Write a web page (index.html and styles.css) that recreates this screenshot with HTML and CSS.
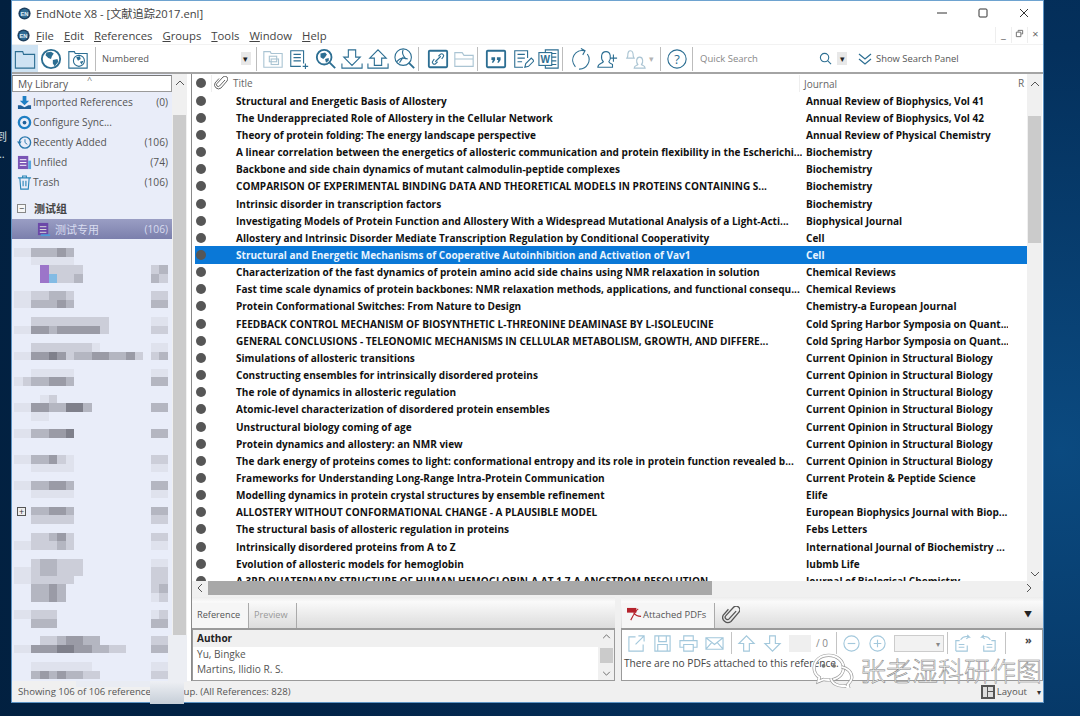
FILE: index.html
```html
<!DOCTYPE html>
<html lang="en">
<head>
    <meta charset="UTF-8">
    <title>EndNote X8</title>
    <link rel="stylesheet" href="styles.css">
</head>
<body>
    <div class="desk-label">到<br>...</div>
    <div class="window">
        <div class="titlebar">
            <svg class="app-icon" viewBox="0 0 16 16"><circle cx="8" cy="8" r="7.500" fill="#1d3f5e"/><circle cx="8" cy="8" r="5.500" fill="#2f6b94"/><text x="8" y="10.500" class="app-en">EN</text></svg>
            <span class="title-text">EndNote X8 - [文献追踪2017.enl]</span>
            <div class="win-controls">
                <svg viewBox="0 0 12 12"><path d="M1 6h10" stroke="#333" fill="none"/></svg>
                <svg viewBox="0 0 12 12"><rect x="2" y="2" width="8" height="8" rx="1" stroke="#333" fill="none"/></svg>
                <svg viewBox="0 0 12 12"><path d="M2 2l8 8M10 2l-8 8" stroke="#333" fill="none"/></svg>
            </div>
        </div>

        <div class="menubar">
            <svg class="app-icon small" viewBox="0 0 16 16"><circle cx="8" cy="8" r="7.500" fill="#1d3f5e"/><circle cx="8" cy="8" r="5.500" fill="#2f6b94"/><text x="8" y="10.500" class="app-en">EN</text></svg>
            <span class="menu-item"><u>F</u>ile</span>
            <span class="menu-item"><u>E</u>dit</span>
            <span class="menu-item"><u>R</u>eferences</span>
            <span class="menu-item"><u>G</u>roups</span>
            <span class="menu-item"><u>T</u>ools</span>
            <span class="menu-item"><u>W</u>indow</span>
            <span class="menu-item"><u>H</u>elp</span>
            <div class="mdi-buttons">
                <span class="mdi-btn">_</span>
                <span class="mdi-btn">
                    <svg viewBox="0 0 10 10"><path d="M3.500 3V1.500h5v4H7M1.500 3.500h5v5h-5z" stroke="#666" fill="none"/></svg>
                </span>
                <span class="mdi-btn">×</span>
            </div>
        </div>

        <div class="toolbar">
            <div class="tool active">
                <svg viewBox="0 0 24 24"><path d="M1.500 7V4h8l1 3h12v15h-21z" class="ln"/></svg>
            </div>
            <div class="tool">
                <svg viewBox="0 0 24 24"><circle cx="12" cy="12" r="10" class="ln thick"/><path d="M7 5l5-1 3 2-2 3-1 3-3-1-3-3zM14 13l5-1 1 3-4 5-2-3z" class="fl"/></svg>
            </div>
            <div class="tool">
                <svg viewBox="0 0 24 24"><path d="M2 7V4h6l1 2h13v16H2z" class="ln"/><circle cx="13" cy="14" r="6" class="ln"/><path d="M10 10l4-1 1 3-3 2zM14 15l4-1-2 4z" class="fl"/></svg>
            </div>
            <span class="sep sep-first"></span>
            <div class="style-select">
                <span>Numbered</span>
                <span class="drop-btn">▾</span>
            </div>
            <span class="sep"></span>
            <div class="tool dim gap-left">
                <svg viewBox="0 0 24 24"><path d="M2 6V4h7l1 2h12v15H2z" class="ln"/><rect x="8" y="9" width="8" height="6" class="ln"/><rect x="10" y="12" width="8" height="6" class="ln"/></svg>
            </div>
            <div class="tool">
                <svg viewBox="0 0 24 24"><path d="M17 17V3H3v17h11M6 7h8M6 10.500h8M6 14h8M19 17v6M16 20h6" class="ln"/></svg>
            </div>
            <div class="tool">
                <svg viewBox="0 0 24 24"><circle cx="10" cy="10" r="8" class="ln thick"/><path d="M6 6l5-1 2 2-2 3-2 2-3-2zM11 12l4-1 0 3-3 2z" class="fl"/><path d="M16 16l6 6" class="ln thick"/></svg>
            </div>
            <div class="tool">
                <svg viewBox="0 0 24 24"><path d="M8 2h8v8h5l-9 9-9-9h5zM1 17v5h22v-5" class="ln"/></svg>
            </div>
            <div class="tool">
                <svg viewBox="0 0 24 24"><path d="M8 19v-8H3l9-9 9 9h-5v8zM1 17v5h22v-5" class="ln"/></svg>
            </div>
            <div class="tool">
                <svg viewBox="0 0 24 24"><circle cx="10" cy="10" r="9" class="ln"/><path d="M10 2c-2 4 1 8 3 10M3 15c3-4 7-5 12-3M10 10l-4 6" class="ln"/><path d="M16 16l6 6" class="ln thick"/></svg>
            </div>
            <span class="sep"></span>
            <div class="tool gap-link">
                <svg viewBox="0 0 24 24"><rect x="2" y="3" width="20" height="18" rx="1" class="ln thick"/><path d="M9 15l6-6M8 12l-1.500 2a2 2 0 0 0 3 3l2-2M16 12l1.500-2a2 2 0 0 0-3-3l-2 2" class="ln"/></svg>
            </div>
            <div class="tool dim">
                <svg viewBox="0 0 24 24"><path d="M2 20V5h8l2 3h10v12zM2 12h20" class="ln"/></svg>
            </div>
            <span class="sep"></span>
            <div class="tool gap-quote">
                <svg viewBox="0 0 24 24"><rect x="2" y="3" width="20" height="18" rx="1" class="ln thick"/><path d="M7 10h4v3l-2 3H7.500l1-3H7zM13 10h4v3l-2 3h-1.500l1-3H13z" class="fl"/></svg>
            </div>
            <div class="tool">
                <svg viewBox="0 0 24 24"><path d="M17 11V3H3v18h9M6 7h8M6 11h8M6 15h5" class="ln"/><path d="M14 21l1-4 6-6 3 3-6 6z" class="ln"/></svg>
            </div>
            <div class="tool">
                <svg viewBox="0 0 24 24"><path d="M8 5V2h14v20H8v-3M15 6h5M15 10h5M15 14h5M15 18h5" class="ln"/><rect x="1" y="5" width="14" height="14" fill="#fff" class="ln"/><text x="8" y="16" class="word-w">W</text></svg>
            </div>
            <span class="sep"></span>
            <div class="tool gap-left-wide">
                <svg viewBox="0 0 24 24"><path d="M7 20.500A10.500 10.500 0 0 1 17 3M13 0.500l4.500 2.500-2.500 4.500M20 6.500A10.500 10.500 0 0 1 11 23" class="ln"/></svg>
            </div>
            <div class="tool">
                <svg viewBox="0 0 24 24"><path d="M2 21c0-4 5-4 6-6-3-3-3-11 3-11 5 0 6 7 3 11 1 2 3 2 4 3v3zM19 7v8M15 11h8" class="ln"/></svg>
            </div>
            <div class="tool wide dim">
                <svg viewBox="0 0 24 24"><path d="M3 9c0-5 1-6 3-6s3 1 3 6l1 2H2zM10 22c0-3 3-3 4-4-2-2-2-8 2-8s4 6 2 8c1 1 4 1 4 4z" class="ln"/></svg>
                <span class="mini-caret">▾</span>
            </div>
            <span class="sep"></span>
            <div class="tool gap-left">
                <svg viewBox="0 0 24 24"><circle cx="12" cy="12" r="10" class="ln"/><text x="12" y="17" class="help-q">?</text></svg>
            </div>
            <span class="sep sep-help"></span>
            <div class="quick-search">Quick Search</div>
            <svg class="search-glass" viewBox="0 0 14 14"><circle cx="6" cy="6" r="4.500" class="ln"/><path d="M9.500 9.500l3.500 3.500" class="ln"/></svg>
            <span class="drop-btn search-drop">▾</span>
            <svg class="chevrons" viewBox="0 0 14 14"><path d="M1 2l6 5 6-5M1 7l6 5 6-5" class="ln"/></svg>
            <span class="search-panel">Show Search Panel</span>
        </div>

        <div class="main">
            <aside class="sidebar">
                <div class="side-content">
                    <div class="lib-head">My Library<span class="sort-mark">^</span></div>
                    <div class="side-item">
                        <svg viewBox="0 0 16 16"><path d="M6 1h4v5h3l-5 5-5-5h3z" fill="#1f7fc4"/><path d="M1 11v4h14v-4l-3 0-4 2-4-2z" fill="#1f5f99"/></svg>
                        <span class="side-name">Imported References</span><span class="side-count">(0)</span>
                    </div>
                    <div class="side-item">
                        <svg viewBox="0 0 16 16"><circle cx="8" cy="8" r="6" fill="none" stroke="#1f7fc4" stroke-width="2.500"/><circle cx="8" cy="8" r="2" fill="#1f5f99"/></svg>
                        <span class="side-name">Configure Sync...</span>
                    </div>
                    <div class="side-item">
                        <svg viewBox="0 0 16 16"><circle cx="8.500" cy="8" r="6" fill="none" stroke="#2a78ad" stroke-width="1.500"/><path d="M8.500 4.500V8l2.500 2" fill="none" stroke="#2a78ad"/><path d="M0 7h5L2.500 10z" fill="#2a78ad"/></svg>
                        <span class="side-name">Recently Added</span><span class="side-count">(106)</span>
                    </div>
                    <div class="side-item">
                        <svg viewBox="0 0 16 16"><rect x="1" y="1" width="11" height="14" fill="#7a55b5"/><path d="M3 5h7M3 8h7M3 11h7" stroke="#fff"/><rect x="12" y="6" width="3" height="9" fill="#5aa6dd"/></svg>
                        <span class="side-name">Unfiled</span><span class="side-count">(74)</span>
                    </div>
                    <div class="side-item">
                        <svg viewBox="0 0 16 16"><path d="M1 3h14M6 3V1h4v2M3 3l1 12h8l1-12M6.500 6v6M9.500 6v6" fill="none" stroke="#2a86b8" stroke-width="1.200"/></svg>
                        <span class="side-name">Trash</span><span class="side-count">(106)</span>
                    </div>
                    <div class="group-head">
                        <span class="tree-box">−</span>
                        <span>测试组</span>
                    </div>
                    <div class="side-item selected">
                        <svg viewBox="0 0 16 16"><rect x="1" y="1" width="11" height="13" fill="#6b48a8"/><path d="M3 5h7M3 8h7M3 11h7" stroke="#ddd"/><rect x="4" y="13" width="10" height="2" fill="#4f9ad6"/></svg>
                        <span class="side-name">测试专用</span><span class="side-count">(106)</span>
                    </div>
                    <div class="mosaic" id="mosaic"></div>
                    <span class="tree-box tree-plus">+</span>
                </div>
                <div class="side-scroll">
                    <svg class="arrow-up" viewBox="0 0 10 6"><path d="M1 5l4-4 4 4" fill="none" stroke="#555"/></svg>
                    <div class="side-thumb"></div>
                </div>
            </aside>

            <div class="right-pane">
                <div class="list-area">
                    <div class="list-inner">
                        <div class="list-head">
                            <span class="head-dot"><i class="dot"></i></span>
                            <svg class="clip" viewBox="0 0 14 14"><path d="M11 4L5.500 10a1.700 1.700 0 0 1-2.500-2.500l6-6.500a2.800 2.800 0 0 1 4 4l-6 7a4 4 0 0 1-6-5l4-4.500" fill="none" stroke="#666"/></svg>
                            <span class="head-title">Title</span>
                            <span class="head-journal">Journal</span>
                            <span class="head-r">R</span>
                        </div>
                        <div class="rows">
                            <div class="row"><i class="dot"></i><span>Structural and Energetic Basis of Allostery</span><span>Annual Review of Biophysics, Vol 41</span></div>
                            <div class="row"><i class="dot"></i><span>The Underappreciated Role of Allostery in the Cellular Network</span><span>Annual Review of Biophysics, Vol 42</span></div>
                            <div class="row"><i class="dot"></i><span>Theory of protein folding: The energy landscape perspective</span><span>Annual Review of Physical Chemistry</span></div>
                            <div class="row"><i class="dot"></i><span>A linear correlation between the energetics of allosteric communication and protein flexibility in the Escherichi...</span><span>Biochemistry</span></div>
                            <div class="row"><i class="dot"></i><span>Backbone and side chain dynamics of mutant calmodulin-peptide complexes</span><span>Biochemistry</span></div>
                            <div class="row"><i class="dot"></i><span>COMPARISON OF EXPERIMENTAL BINDING DATA AND THEORETICAL MODELS IN PROTEINS CONTAINING S...</span><span>Biochemistry</span></div>
                            <div class="row"><i class="dot"></i><span>Intrinsic disorder in transcription factors</span><span>Biochemistry</span></div>
                            <div class="row"><i class="dot"></i><span>Investigating Models of Protein Function and Allostery With a Widespread Mutational Analysis of a Light-Acti...</span><span>Biophysical Journal</span></div>
                            <div class="row"><i class="dot"></i><span>Allostery and Intrinsic Disorder Mediate Transcription Regulation by Conditional Cooperativity</span><span>Cell</span></div>
                            <div class="row selected"><i class="dot"></i><span>Structural and Energetic Mechanisms of Cooperative Autoinhibition and Activation of Vav1</span><span>Cell</span></div>
                            <div class="row"><i class="dot"></i><span>Characterization of the fast dynamics of protein amino acid side chains using NMR relaxation in solution</span><span>Chemical Reviews</span></div>
                            <div class="row"><i class="dot"></i><span>Fast time scale dynamics of protein backbones: NMR relaxation methods, applications, and functional consequ...</span><span>Chemical Reviews</span></div>
                            <div class="row"><i class="dot"></i><span>Protein Conformational Switches: From Nature to Design</span><span>Chemistry-a European Journal</span></div>
                            <div class="row"><i class="dot"></i><span>FEEDBACK CONTROL MECHANISM OF BIOSYNTHETIC L-THREONINE DEAMINASE BY L-ISOLEUCINE</span><span>Cold Spring Harbor Symposia on Quant...</span></div>
                            <div class="row"><i class="dot"></i><span>GENERAL CONCLUSIONS - TELEONOMIC MECHANISMS IN CELLULAR METABOLISM, GROWTH, AND DIFFERE...</span><span>Cold Spring Harbor Symposia on Quant...</span></div>
                            <div class="row"><i class="dot"></i><span>Simulations of allosteric transitions</span><span>Current Opinion in Structural Biology</span></div>
                            <div class="row"><i class="dot"></i><span>Constructing ensembles for intrinsically disordered proteins</span><span>Current Opinion in Structural Biology</span></div>
                            <div class="row"><i class="dot"></i><span>The role of dynamics in allosteric regulation</span><span>Current Opinion in Structural Biology</span></div>
                            <div class="row"><i class="dot"></i><span>Atomic-level characterization of disordered protein ensembles</span><span>Current Opinion in Structural Biology</span></div>
                            <div class="row"><i class="dot"></i><span>Unstructural biology coming of age</span><span>Current Opinion in Structural Biology</span></div>
                            <div class="row"><i class="dot"></i><span>Protein dynamics and allostery: an NMR view</span><span>Current Opinion in Structural Biology</span></div>
                            <div class="row"><i class="dot"></i><span>The dark energy of proteins comes to light: conformational entropy and its role in protein function revealed b...</span><span>Current Opinion in Structural Biology</span></div>
                            <div class="row"><i class="dot"></i><span>Frameworks for Understanding Long-Range Intra-Protein Communication</span><span>Current Protein &amp; Peptide Science</span></div>
                            <div class="row"><i class="dot"></i><span>Modelling dynamics in protein crystal structures by ensemble refinement</span><span>Elife</span></div>
                            <div class="row"><i class="dot"></i><span>ALLOSTERY WITHOUT CONFORMATIONAL CHANGE - A PLAUSIBLE MODEL</span><span>European Biophysics Journal with Biop...</span></div>
                            <div class="row"><i class="dot"></i><span>The structural basis of allosteric regulation in proteins</span><span>Febs Letters</span></div>
                            <div class="row"><i class="dot"></i><span>Intrinsically disordered proteins from A to Z</span><span>International Journal of Biochemistry ...</span></div>
                            <div class="row"><i class="dot"></i><span>Evolution of allosteric models for hemoglobin</span><span>Iubmb Life</span></div>
                            <div class="row"><i class="dot"></i><span>A 3RD QUATERNARY STRUCTURE OF HUMAN HEMOGLOBIN-A AT 1.7-A ANGSTROM RESOLUTION</span><span>Journal of Biological Chemistry</span></div>
                        </div>
                    </div>
                    <div class="list-scroll">
                        <svg class="arrow-up" viewBox="0 0 10 6"><path d="M1 5l4-4 4 4" fill="none" stroke="#555"/></svg>
                        <div class="list-thumb"></div>
                        <svg class="arrow-down" viewBox="0 0 10 6"><path d="M1 1l4 4 4-4" fill="none" stroke="#555"/></svg>
                    </div>
                </div>
                <div class="hscroll">
                    <svg viewBox="0 0 6 10"><path d="M5 1L1 5l4 4" fill="none" stroke="#555"/></svg>
                    <div class="hthumb"></div>
                    <svg viewBox="0 0 6 10"><path d="M1 1l4 4-4 4" fill="none" stroke="#555"/></svg>
                </div>

                <div class="bottom-panels">
                    <div class="panel-left">
                        <div class="tabs">
                            <span class="tab on">Reference</span>
                            <span class="tab off">Preview</span>
                        </div>
                        <div class="author-box">
                            <div class="author-fields">
                                <div class="author-label">Author</div>
                                <div class="author-line">Yu, Bingke</div>
                                <div class="author-line">Martins, Ilidio R. S.</div>
                            </div>
                            <div class="author-scroll">
                                <svg viewBox="0 0 10 6"><path d="M1 5l4-4 4 4" fill="none" stroke="#555"/></svg>
                                <div class="author-thumb"></div>
                                <svg viewBox="0 0 10 6"><path d="M1 1l4 4 4-4" fill="none" stroke="#555"/></svg>
                            </div>
                        </div>
                    </div>
                    <div class="panel-right">
                        <div class="tabs">
                            <span class="tab on pdf-tab">
                                <svg viewBox="0 0 16 16"><rect x="0" y="1" width="10" height="5" fill="#b5222c"/><path d="M12 2c-3 2-6 8-8 12M7 6c2 3 5 4 8 4" fill="none" stroke="#b5222c" stroke-width="1.200"/></svg>
                                Attached PDFs
                            </span>
                            <svg class="pdf-clip" viewBox="0 0 14 14"><path d="M11 4L5.500 10a1.700 1.700 0 0 1-2.500-2.500l6-6.500a2.800 2.800 0 0 1 4 4l-6 7a4 4 0 0 1-6-5l4-4.500" fill="none" stroke="#555"/></svg>
                            <span class="panel-menu">▼</span>
                        </div>
                        <div class="pdf-box">
                            <div class="pdf-tools">
                                <svg viewBox="0 0 20 20"><path d="M9 3H2v15h15v-7M9 11l9-9M12 2h6v6" class="lt"/></svg>
                                <svg viewBox="0 0 20 20"><path d="M2 2h16v16H2zM6 2v6h8V2M5 18v-7h10v7" class="lt"/></svg>
                                <svg viewBox="0 0 20 20"><path d="M5 7V2h10v5M5 14H1V7h18v7h-4M5 11h10v7H5z" class="lt"/></svg>
                                <svg viewBox="0 0 20 20"><path d="M1 4h18v12H1zM1 4l9 7 9-7M1 16l6-7M19 16l-6-7" class="lt"/></svg>
                                <span class="pdf-sep"></span>
                                <svg viewBox="0 0 20 20"><path d="M7 18v-8H2l8-8 8 8h-5v8z" class="lt"/></svg>
                                <svg viewBox="0 0 20 20"><path d="M7 2v8H2l8 8 8-8h-5V2z" class="lt"/></svg>
                                <span class="page-box"></span>
                                <span class="page-total">/ 0</span>
                                <span class="pdf-sep"></span>
                                <svg viewBox="0 0 20 20"><circle cx="10" cy="10" r="8" class="lt"/><path d="M6 10h8" class="lt"/></svg>
                                <svg viewBox="0 0 20 20"><circle cx="10" cy="10" r="8" class="lt"/><path d="M6 10h8M10 6v8" class="lt"/></svg>
                                <span class="zoom-combo">▾</span>
                                <span class="pdf-sep"></span>
                                <svg viewBox="0 0 20 20"><path d="M3 18V7h4M3 18h12v-6M6 11h6M6 14h6M8 6c2-3 5-4 9-3l-2-2M17 3l-3 2" class="lt"/></svg>
                                <svg viewBox="0 0 20 20"><path d="M17 18V7h-4M17 18H5v-6M8 11h6M8 14h6M12 6C10 3 7 2 3 3l2-2M3 3l3 2" class="lt"/></svg>
                                <span class="pdf-sep"></span>
                                <span class="more">»</span>
                            </div>
                            <div class="no-pdf">There are no PDFs attached to this reference.</div>
                        </div>
                    </div>
                </div>
            </div>
        </div>

        <div class="statusbar">
            <span>Showing 106 of 106 references in group. (All References: 828)</span>
            <div class="layout-btn">
                <svg viewBox="0 0 14 14"><rect width="14" height="14" fill="#555"/><rect x="2" y="2" width="4" height="10" fill="#ddd"/><rect x="7" y="2" width="5" height="4" fill="#ddd"/><rect x="7" y="7" width="5" height="5" fill="#ddd"/></svg>
                Layout
                <span class="layout-caret">▾</span>
            </div>
        </div>
    </div>

    <!-- things lying over the window -->
    <div class="smudge status-top"></div>
    <div class="smudge status-smudge"></div>
    <div class="smudge scroll-smudge"></div>
    <div class="watermark">
        <svg viewBox="0 0 40 34">
            <path d="M16 3C8 3 2 8 2 15c0 4 2 7 5 9l-1 4 5-2c2 .5 3 .5 5 .5 8 0 14-5 14-11.500S24 3 16 3z" class="wm-under"/>
            <path d="M16 3C8 3 2 8 2 15c0 4 2 7 5 9l-1 4 5-2c2 .5 3 .5 5 .5 8 0 14-5 14-11.500S24 3 16 3z" class="wm-over"/>
            <path d="M28 14c6 1 10 5 10 10 0 3-2 5-4 7l1 3-4-2c-6 1-12-2-13-7" class="wm-under"/>
            <path d="M28 14c6 1 10 5 10 10 0 3-2 5-4 7l1 3-4-2c-6 1-12-2-13-7" class="wm-over"/>
            <circle cx="11" cy="13" r="1.800" fill="#777"/><circle cx="21" cy="13" r="1.800" fill="#777"/>
        </svg>
        <span>张老湿科研作图</span>
    </div>

    <script src="mosaic.js"></script>
</body>
</html>
```

FILE: styles.css
```css
* {
    box-sizing: border-box;
}

body {
    margin: 0;
    width: 1080px;
    height: 716px;
    overflow: hidden;
    position: relative;
    font-family: 'Open Sans', 'Noto Sans', 'Noto Sans CJK SC', sans-serif;
    font-size: 11px;
    color: #444;
    background: radial-gradient(circle at 1060px 450px, #0b4a80 0, #04305c 35%, #022347 70%, #02203f 100%);
}

.desk-label {
    position: absolute;
    left: -4px;
    top: 128px;
    width: 14px;
    color: #d8e0e8;
    font-size: 11px;
    line-height: 17px;
}

.window {
    position: absolute;
    left: 11px;
    top: 0;
    width: 1033px;
    height: 703px;
    display: flex;
    flex-direction: column;
    background: #fff;
    border: 1px solid #5c93c4;
    border-top-color: #6ea3d0;
}

/* title + menu */
.titlebar {
    height: 24px;
    display: flex;
    align-items: center;
}

.app-icon {
    width: 13px;
    height: 13px;
    margin-left: 6px;
}

.app-icon.small {
    margin-left: 5px;
    margin-right: 6px;
}

.app-en {
    font-family: 'Liberation Sans', sans-serif;
    font-size: 7px;
    font-weight: bold;
    text-anchor: middle;
    fill: #e4eef5;
}

.title-text {
    margin-left: 5px;
    font-size: 11.2px;
    color: #444;
}

.win-controls {
    margin-left: auto;
    display: flex;
    gap: 29px;
    padding-right: 13px;
}

.win-controls svg {
    width: 12px;
    height: 12px;
}

.menubar {
    height: 19px;
    display: flex;
    align-items: center;
    padding-top: 1px;
}

.menu-item {
    font-size: 11.3px;
    color: #444;
    margin-right: 10px;
}

.mdi-buttons {
    margin-left: auto;
    display: flex;
    height: 16px;
}

.mdi-btn {
    width: 16px;
    height: 16px;
    border-left: 1px solid #eee;
    text-align: center;
    font-size: 11px;
    line-height: 14px;
    color: #666;
}

.mdi-btn svg {
    width: 9px;
    height: 9px;
}

/* toolbar */
.toolbar {
    height: 30px;
    display: flex;
    align-items: center;
    border-bottom: 2px solid #a4a4a4;
    border-top: 1px solid #f2f2f2;
}

.tool {
    width: 26.3px;
    height: 27px;
    display: flex;
    align-items: center;
    justify-content: center;
    flex: none;
}

.tool svg {
    width: 22px;
    height: 22px;
}

.tool.active {
    background: #cfe3f3;
}

.tool.wide {
    width: 40px;
}

.tool.dim {
    opacity: 0.4;
}

.gap-left {
    margin-left: 3px;
}

.gap-link {
    margin-left: 6px;
}

.gap-quote {
    margin-left: 5px;
}

.gap-left-wide {
    margin-left: 4px;
}

.ln {
    fill: none;
    stroke: #2c6e92;
    stroke-width: 1.2;
}

.ln.thick {
    stroke-width: 2;
}

.fl {
    fill: #2c6e92;
}

.word-w {
    font-family: 'Liberation Sans', sans-serif;
    font-size: 11px;
    font-weight: bold;
    text-anchor: middle;
    fill: #2c6e92;
}

.help-q {
    font-family: 'Open Sans', sans-serif;
    font-size: 14px;
    text-anchor: middle;
    fill: #2c6e92;
}

.mini-caret {
    font-size: 9px;
    margin-left: 2px;
}

.sep {
    flex: none;
    width: 1px;
    height: 24px;
    background: #bcbcbc;
}

.sep-first {
    margin-left: 4px;
}

.sep-help {
    margin-left: 2px;
}

.style-select {
    width: 160px;
    flex: none;
    display: flex;
    align-items: center;
    padding-left: 6px;
    padding-right: 5px;
    justify-content: space-between;
    font-size: 9.3px;
    color: #555;
}

.drop-btn {
    width: 10px;
    height: 13px;
    background: #e8e8e8;
    font-size: 9px;
    line-height: 13px;
    text-align: center;
    color: #222;
}

.quick-search {
    width: 126px;
    flex: none;
    padding-left: 7px;
    font-size: 9.5px;
    color: #888;
}

.search-glass {
    width: 13px;
    height: 13px;
    flex: none;
}

.search-drop {
    margin-left: 5px;
    flex: none;
}

.chevrons {
    width: 14px;
    height: 14px;
    margin-left: 11px;
    flex: none;
}

.search-panel {
    margin-left: 4px;
    font-size: 9.4px;
    color: #555;
}

/* main split */
.main {
    flex: 1;
    display: flex;
    min-height: 0;
}

.sidebar {
    width: 175px;
    flex: none;
    display: flex;
    background: #f0f0f0;
}

.side-content {
    width: 160px;
    flex: none;
    background: #e9edf9;
    position: relative;
    overflow: hidden;
}

.lib-head {
    height: 17px;
    background: #fff;
    border: 1px solid #9a9a9a;
    border-top-color: #777;
    padding-left: 5px;
    font-size: 10.2px;
    line-height: 16px;
    color: #555;
    position: relative;
    margin-top: 1px;
}

.sort-mark {
    position: absolute;
    left: 74px;
    top: -4px;
    color: #777;
    font-size: 9px;
}

.side-item {
    height: 20px;
    display: flex;
    align-items: center;
    font-size: 10.2px;
    color: #555;
    padding: 0 4px 0 5px;
}

.side-item svg {
    width: 15px;
    height: 15px;
    margin-right: 1px;
    flex: none;
}

.side-count {
    margin-left: auto;
}

.group-head {
    display: flex;
    align-items: center;
    height: 16px;
    margin-top: 8px;
    margin-bottom: 3px;
    padding-left: 5px;
    font-size: 11px;
    font-weight: bold;
    color: #444;
    gap: 8px;
}

.tree-box {
    width: 9px;
    height: 9px;
    border: 1px solid #888;
    background: #f6f6f6;
    font-size: 9px;
    font-weight: normal;
    line-height: 7px;
    text-align: center;
    color: #333;
}

.side-item.selected {
    background: linear-gradient(#9a9ec4, #7b7fac);
    color: #d8dcf0;
    padding-left: 25px;
    font-size: 11px;
}

.side-item.selected .side-name {
    margin-left: 2px;
}

.side-item.selected .side-count {
    font-size: 10.2px;
}

.mosaic {
    margin-top: 9px;
    padding-left: 2px;
    padding-right: 4px;
}

.mosaic-line {
    display: flex;
    height: 8.63px;
}

.mosaic-line i {
    width: 8.63px;
    flex: none;
}

.mosaic-line .gap {
    margin-left: auto;
}

.c1 { background: #dfe2ed; }
.c2 { background: #ccced9; }
.c3 { background: #b4b6c1; }
.c4 { background: #9a9ba6; }
.c5 { background: #7f808b; }
.cp { background: #9c75c9; }
.cb { background: #83bbe4; }

.tree-plus {
    position: absolute;
    left: 5px;
    top: 433px;
    background: #eee;
    border-color: #555;
}

.side-scroll {
    width: 15px;
    flex: none;
    padding-top: 6px;
}

.arrow-up, .arrow-down {
    display: block;
    width: 10px;
    height: 6px;
    margin: 0 auto;
}

.side-thumb {
    width: 13px;
    height: 520px;
    margin: 29px 1px 0;
    background: #cbcbcb;
}

.right-pane {
    flex: 1;
    min-width: 0;
    display: flex;
    flex-direction: column;
    margin-left: 4px;
    border-left: 1px solid #8a8a8a;
}

.list-area {
    height: 507px;
    flex: none;
    display: flex;
    overflow: hidden;
}

.list-inner {
    width: 835px;
    flex: none;
    overflow: hidden;
}

.list-head {
    height: 18px;
    display: flex;
    align-items: center;
    font-size: 10px;
    color: #666;
}

.head-dot {
    width: 20px;
    padding-left: 4px;
    border-right: 1px solid #eee;
    height: 17px;
    display: flex;
    align-items: center;
}

.clip {
    width: 14px;
    height: 14px;
    margin-left: 2px;
}

.head-title {
    margin-left: 5px;
    width: 566px;
}

.head-journal {
    width: 218px;
    padding-left: 4px;
    border-left: 1px solid #eee;
    height: 17px;
    line-height: 19px;
}

.head-r {
    padding-left: 1px;
    line-height: 19px;
}

.dot {
    display: block;
    width: 10px;
    height: 10px;
    border-radius: 50%;
    background: #565656;
    flex: none;
}

.rows {
    padding-left: 3px;
}

.row {
    height: 17.17px;
    display: grid;
    grid-template-columns: 37px 570px 206px;
    align-items: center;
    width: 832px;
    font-size: 10.05px;
    font-weight: 700;
    color: #111;
    white-space: nowrap;
}

.row span {
    padding-left: 4px;
    overflow: hidden;
}

.row .dot {
    margin-left: 1px;
}

.row.selected {
    background: #0a78d7;
    color: #e9f4ff;
}

.list-scroll {
    width: 15px;
    flex: none;
    background: #f0f0f0;
    padding-top: 7px;
    display: flex;
    flex-direction: column;
}

.list-thumb {
    width: 13px;
    height: 127px;
    margin: 29px auto 0;
    background: #cbcbcb;
}

.arrow-down {
    margin-top: auto;
    margin-bottom: 4px;
}

.hscroll {
    height: 16px;
    flex: none;
    display: flex;
    align-items: flex-start;
    background: #f0f0f0;
}

.hscroll svg {
    width: 6px;
    height: 10px;
    margin: 2px 5px 0;
    flex: none;
}

.hscroll svg:last-child {
    margin-left: auto;
    margin-right: 11px;
}

.hthumb {
    width: 504px;
    height: 14px;
    background: #a8a8a8;
}

/* bottom panes */
.bottom-panels {
    flex: 1;
    display: flex;
    gap: 6px;
    min-height: 0;
    background: #f0f0f0;
}

.panel-left {
    width: 423px;
    flex: none;
    display: flex;
    flex-direction: column;
}

.panel-right {
    flex: 1;
    min-width: 0;
    display: flex;
    flex-direction: column;
}

.tabs {
    height: 31px;
    flex: none;
    display: flex;
    align-items: flex-end;
    position: relative;
    background: linear-gradient(#ececec, #fafafa 15%, #dcdcdc);
}

.tab {
    height: 25px;
    display: flex;
    align-items: center;
    padding: 0 5px 2px;
    font-size: 9.2px;
    border-right: 1px solid #aaa;
}

.tab.on {
    background: #f6f6f6;
    color: #555;
    width: 57px;
}

.tab.off {
    color: #999;
    width: 48px;
}

.tab.pdf-tab {
    width: 93px;
    margin-left: 1px;
    font-size: 9.4px;
}

.pdf-tab svg {
    width: 15px;
    height: 15px;
    margin-right: 1px;
}

.pdf-clip {
    width: 18px;
    height: 18px;
    margin: 0 0 4px 7px;
}

.panel-menu {
    position: absolute;
    right: 11px;
    top: 11px;
    font-size: 8px;
    color: #222;
}

.author-box {
    height: 53px;
    display: flex;
    border: 1px solid #9a9a9a;
    border-top-width: 2px;
    background: #fff;
}

.author-fields {
    flex: 1;
    padding-left: 4px;
}

.author-label {
    height: 17px;
    margin-left: -4px;
    padding-left: 4px;
    background: #f0f0f0;
    font-size: 10px;
    font-weight: 700;
    line-height: 17px;
    color: #222;
}

.author-line {
    font-size: 10.1px;
    line-height: 15px;
    color: #555;
}

.author-scroll {
    width: 16px;
    background: #f0f0f0;
    display: flex;
    flex-direction: column;
    align-items: center;
    justify-content: space-between;
    padding: 4px 0;
}

.author-scroll svg {
    width: 9px;
    height: 5px;
}

.author-thumb {
    width: 13px;
    height: 15px;
    background: #cbcbcb;
}

.pdf-box {
    height: 53px;
    border: 1px solid #9a9a9a;
    border-top-width: 2px;
    background: #fff;
    overflow: hidden;
}

.pdf-tools {
    height: 26px;
    display: flex;
    align-items: center;
    gap: 7px;
    padding-left: 5px;
}

.pdf-tools svg {
    width: 19px;
    height: 19px;
    flex: none;
}

.lt {
    fill: none;
    stroke: #a3c8dc;
    stroke-width: 1.2;
}

.pdf-sep {
    width: 1px;
    height: 22px;
    background: #c4c4c4;
    flex: none;
    margin-right: -2px;
}

.page-box {
    width: 22px;
    height: 17px;
    background: #efefef;
    flex: none;
}

.page-total {
    color: #888;
    font-size: 10px;
    width: 13px;
    white-space: nowrap;
    margin-left: -2px;
}

.zoom-combo {
    width: 50px;
    height: 17px;
    background: #f2f2f2;
    border: 1px solid #ccc;
    text-align: right;
    padding-right: 3px;
    font-size: 8px;
    line-height: 15px;
    color: #888;
    flex: none;
    margin-right: -4px;
}

.more {
    margin-left: 14px;
    margin-top: -8px;
    font-size: 11px;
    font-weight: bold;
    color: #444;
}

.no-pdf {
    padding-left: 2px;
    font-size: 10.2px;
    color: #444;
    white-space: nowrap;
}

/* status */
.statusbar {
    height: 21px;
    flex: none;
    display: flex;
    align-items: center;
    background: #f0f0f0;
    padding-left: 6px;
    font-size: 9.6px;
    color: #555;
}

.layout-btn {
    margin-left: auto;
    display: flex;
    align-items: center;
    gap: 2px;
}

.layout-btn svg {
    width: 14px;
    height: 14px;
}

.layout-caret {
    margin-left: 8px;
    margin-right: 2px;
    font-size: 8px;
    color: #333;
}

/* overlays */
.smudge {
    position: absolute;
}

.status-top {
    left: 76px;
    top: 681px;
    width: 74px;
    height: 6px;
    background: #e9ecf3;
}

.status-smudge {
    left: 150px;
    top: 681px;
    width: 34px;
    height: 23px;
    background: linear-gradient(#eef0f4, #c6ced8);
}

.scroll-smudge {
    left: 168px;
    top: 635px;
    width: 19px;
    height: 47px;
    background: #eceef3;
}

.watermark {
    position: absolute;
    left: 812px;
    top: 652px;
    display: flex;
    align-items: center;
    gap: 6px;
}

.watermark svg {
    width: 42px;
    height: 36px;
}

.wm-under {
    fill: none;
    stroke: #999;
    stroke-width: 3;
}

.wm-over {
    fill: none;
    stroke: #fff;
    stroke-width: 1.8;
}

.watermark span {
    font-family: 'Noto Sans CJK SC', sans-serif;
    font-size: 26px;
    font-weight: 300;
    line-height: 30px;
    color: #f8f8f8;
    -webkit-text-stroke: 0.5px #808080;
}
```

FILE: mosaic.js
```js
// blurred-out group list, one string per line of cells: name|count
const lines = [
    '1133343|', '..11111|', '...p2222|23', '...pb223|32', '|',
    '1122332|22', '1133343|33', '|',
    '..222222222|11', '11443444442|22', '|',
    '..22222221|11', '114454233443342|23', '|',
    '..11111|11', '1233443|33', '|',
    '...12|', '114433553|33', '..11|', '|',
    '1133445|33', '|', '|',
    '1133421|22', '..11111|11', '|',
    '1133443|33', '..11111|11', '|',
    '..33443|33', '..22222|22', '|',
    '..22342|22', '1122232|11', '|',
    '..233222|11', '11233222|22', '1122222|22',
    '..3343|23', '..3343|12', '|',
    '11222|12', '..333|33', '|',
    '...2234433|22', '1144455443322|33', '|',
    '..1111111|11', '..34343322|22', '|'
];

const mosaic = document.getElementById('mosaic');

function addCells(line, text) {
    for (const ch of text) {
        const cell = document.createElement('i');
        if (ch !== '.') cell.className = 'c' + ch;
        line.appendChild(cell);
    }
}

lines.forEach(text => {
    const [name, count] = text.split('|');
    const line = document.createElement('div');
    line.className = 'mosaic-line';
    addCells(line, name);
    const gap = document.createElement('span');
    gap.className = 'gap';
    line.appendChild(gap);
    addCells(line, count);
    mosaic.appendChild(line);
});
```
